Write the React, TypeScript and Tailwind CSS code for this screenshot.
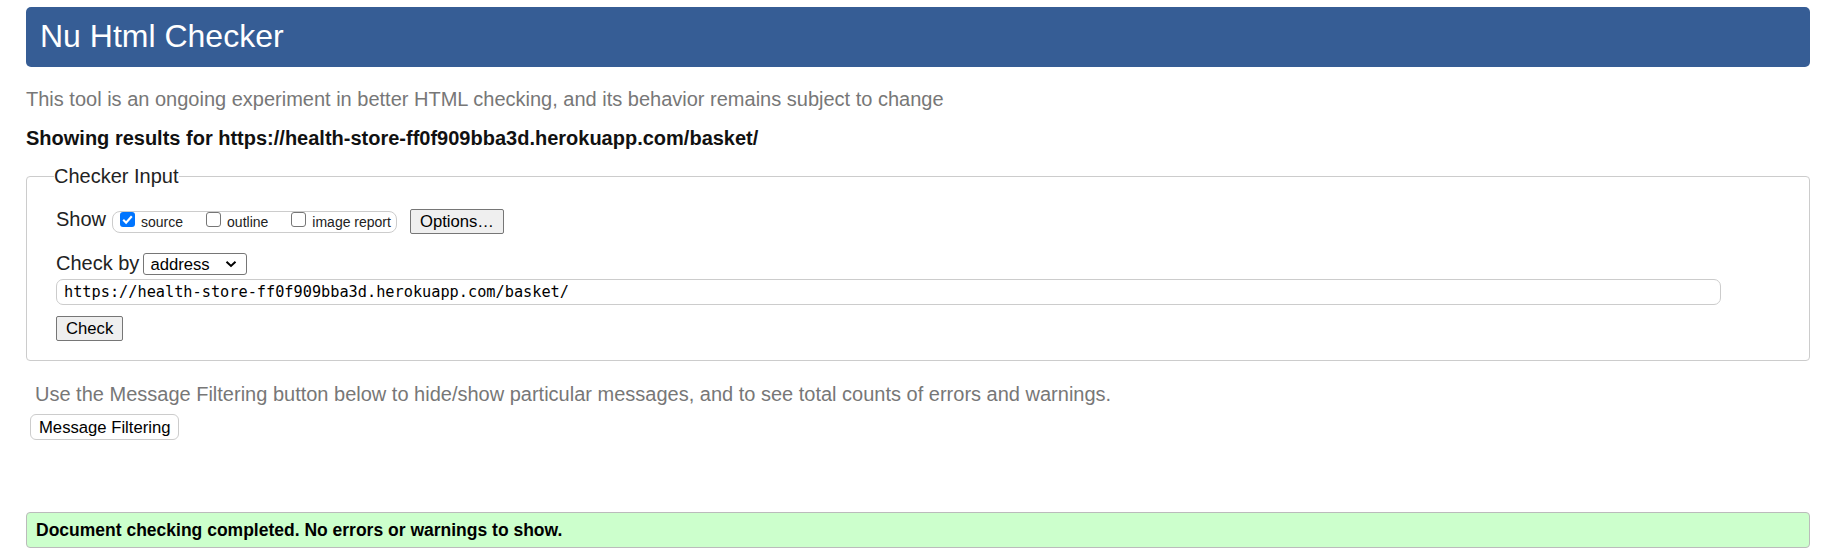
function CheckBox({ checked }: { checked?: boolean }) {
  if (checked) {
    return (
      <span className="mb-[5px] flex h-[15px] w-[15px] items-center justify-center rounded-[3px] bg-[#0075ff]">
        <svg viewBox="0 0 14 14" className="h-[15px] w-[15px]">
          <path d="M3 7.3 L5.7 10 L11 4" fill="none" stroke="#ffffff" strokeWidth="2" />
        </svg>
      </span>
    );
  }
  return <span className="mb-[5px] h-[15px] w-[15px] rounded-[3px] border border-[#767676] bg-white" />;
}

export default function App() {
  return (
    <div className="min-h-[558px] bg-white pl-[26px] pr-[16px] pt-[7px] font-['Liberation_Sans',Arial,sans-serif] text-[20px] leading-[23px] text-[#222]">
      {/* Title bar */}
      <header className="h-[60px] rounded-[5px] bg-[#365d95] pl-[14px] pt-[11px]">
        <h1 className="text-[32px] leading-[36px] text-white">Nu Html Checker</h1>
      </header>

      <p className="mt-[21px] text-[#777]">
        This tool is an ongoing experiment in better HTML checking, and its behavior remains subject to change
      </p>
      <p className="mt-[16px] font-bold text-[#111]">
        Showing results for https://health-store-ff0f909bba3d.herokuapp.com/basket/
      </p>

      {/* Checker input */}
      <fieldset className="mt-[15px] rounded-[4px] border border-[#ccc] pb-[19px] pl-[29px] pr-[16px] pt-[20px]">
        <legend className="-ml-[2px] px-0">Checker Input</legend>

        <div className="flex items-start">
          <span>Show</span>
          <div className="ml-[6px] mt-[3px] flex h-[22px] items-center rounded-[8px] border border-[#ccc] pl-[7px] pr-[5px] text-[14px] leading-[16px]">
            <label className="flex items-center">
              <CheckBox checked />
              <span className="ml-[6px]">source</span>
            </label>
            <label className="ml-[23px] flex items-center">
              <CheckBox />
              <span className="ml-[6px]">outline</span>
            </label>
            <label className="ml-[23px] flex items-center">
              <CheckBox />
              <span className="ml-[6px]">image report</span>
            </label>
          </div>
          <button className="ml-[13px] mt-[1px] h-[25px] rounded-[2px] border border-[#767676] bg-[#efefef] px-[9px] text-[16.67px] leading-[19px] text-black">
            Options…
          </button>
        </div>

        <div className="mt-[18px] flex items-start">
          <span>Check by</span>
          <div className="ml-[4px] mt-[1px] flex h-[22px] w-[104px] items-center justify-between rounded-[3px] border border-[#767676] bg-white pl-[6px] pr-[9px] text-[16.67px] leading-[19px] text-black">
            <span>address</span>
            <svg viewBox="0 0 12 8" className="h-[8px] w-[12px]">
              <path d="M1.5 1.8 L6 6 L10.5 1.8" fill="none" stroke="#000" strokeWidth="2" />
            </svg>
          </div>
        </div>

        <div className="mt-[4px] flex h-[26px] w-[1665px] items-center rounded-[7px] border border-[#ccc] pl-[7px] font-['DejaVu_Sans_Mono',monospace] text-[15.25px] text-black">
          https://health-store-ff0f909bba3d.herokuapp.com/basket/
        </div>

        <button className="mt-[11px] block h-[25px] rounded-[2px] border border-[#767676] bg-[#efefef] px-[9px] text-[16.67px] leading-[19px] text-black">
          Check
        </button>
      </fieldset>

      <p className="mt-[22px] pl-[9px] text-[#777]">
        Use the Message Filtering button below to hide/show particular messages, and to see total counts of errors and warnings.
      </p>
      <button className="ml-[4px] mt-[8px] block h-[26px] rounded-[6px] border border-[#ccc] bg-white px-[8px] text-[16.67px] leading-[19px] text-black">
        Message Filtering
      </button>

      {/* Result */}
      <div className="mt-[72px] flex h-[36px] items-center rounded-[4px] border border-[#bbb] bg-[#ccffcc] pl-[9px] text-[17.5px] font-bold leading-[20px] text-black">
        Document checking completed. No errors or warnings to show.
      </div>
    </div>
  );
}
